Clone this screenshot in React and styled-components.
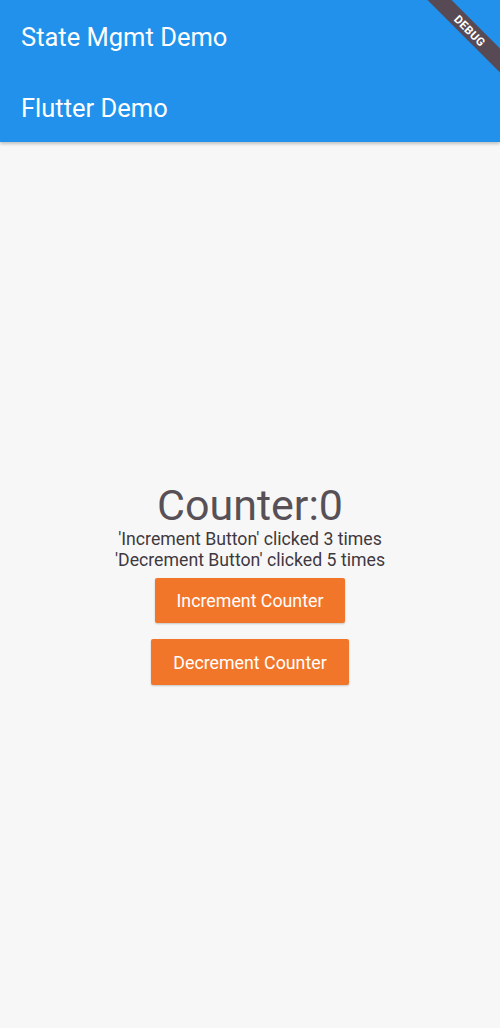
import React, { useState } from "react";
import styled, { createGlobalStyle } from "styled-components";

const GlobalStyle = createGlobalStyle`
  html, body {
    margin: 0;
    padding: 0;
    background: #f8f7f8;
    font-family: Roboto, "Noto Sans", "Liberation Sans", sans-serif;
  }
`;

const App = () => {
  const [counter, setCounter] = useState(0);
  const [incClicks, setIncClicks] = useState(3);
  const [decClicks, setDecClicks] = useState(5);

  return (
    <Screen>
      <GlobalStyle />
      <AppBar>
        <BarTitle>State Mgmt Demo</BarTitle>
        <BarTitle>Flutter Demo</BarTitle>
      </AppBar>
      <Body>
        <CounterText>Counter:{counter}</CounterText>
        <ClickText>'Increment Button' clicked {incClicks} times</ClickText>
        <ClickText>'Decrement Button' clicked {decClicks} times</ClickText>
        <Button
          onClick={() => {
            setCounter(counter + 1);
            setIncClicks(incClicks + 1);
          }}
        >
          Increment Counter
        </Button>
        <Button
          onClick={() => {
            setCounter(counter - 1);
            setDecClicks(decClicks + 1);
          }}
        >
          Decrement Counter
        </Button>
      </Body>
      <Banner>
        <span>DEBUG</span>
      </Banner>
    </Screen>
  );
};

const Screen = styled.div`
  position: relative;
  width: 500px;
  height: 1028px;
  overflow: hidden;
  display: flex;
  flex-direction: column;
  background: #f8f7f8;
`;

const AppBar = styled.header`
  background: #2191eb;
  height: 142px;
  display: flex;
  flex-direction: column;
  box-shadow: 0 2px 3px rgba(0, 0, 0, 0.22);
  z-index: 1;
`;

const BarTitle = styled.div`
  flex: 1;
  display: flex;
  align-items: center;
  padding-left: 21px;
  padding-top: 2px;
  color: #fff;
  font-size: 25.5px;
  font-weight: 400;
`;

const Body = styled.main`
  flex: 1;
  display: flex;
  flex-direction: column;
  align-items: center;
  justify-content: center;
  padding-bottom: 4px;
`;

const CounterText = styled.div`
  font-size: 43px;
  color: #575157;
  line-height: 48px;
`;

const ClickText = styled.div`
  font-size: 17.7px;
  color: #3f393f;
  line-height: 21px;
`;

const Button = styled.button`
  margin-top: 7px;
  padding: 0 22px;
  height: 45px;
  border: none;
  border-radius: 2px;
  background: #f2762a;
  color: #fff;
  font-family: inherit;
  font-size: 17.8px;
  cursor: pointer;
  box-shadow: 0 1px 2px rgba(0, 0, 0, 0.2);
  & + & {
    margin-top: 16px;
    height: 46px;
  }
`;

const Banner = styled.div`
  position: absolute;
  top: 21.5px;
  right: -30px;
  width: 120px;
  height: 17px;
  background: #574a55;
  transform: rotate(45deg);
  display: flex;
  align-items: center;
  justify-content: center;
  z-index: 2;
  span {
    color: #fff;
    font-size: 11.5px;
    font-weight: 700;
    letter-spacing: 0.4px;
  }
`;

export default App;
